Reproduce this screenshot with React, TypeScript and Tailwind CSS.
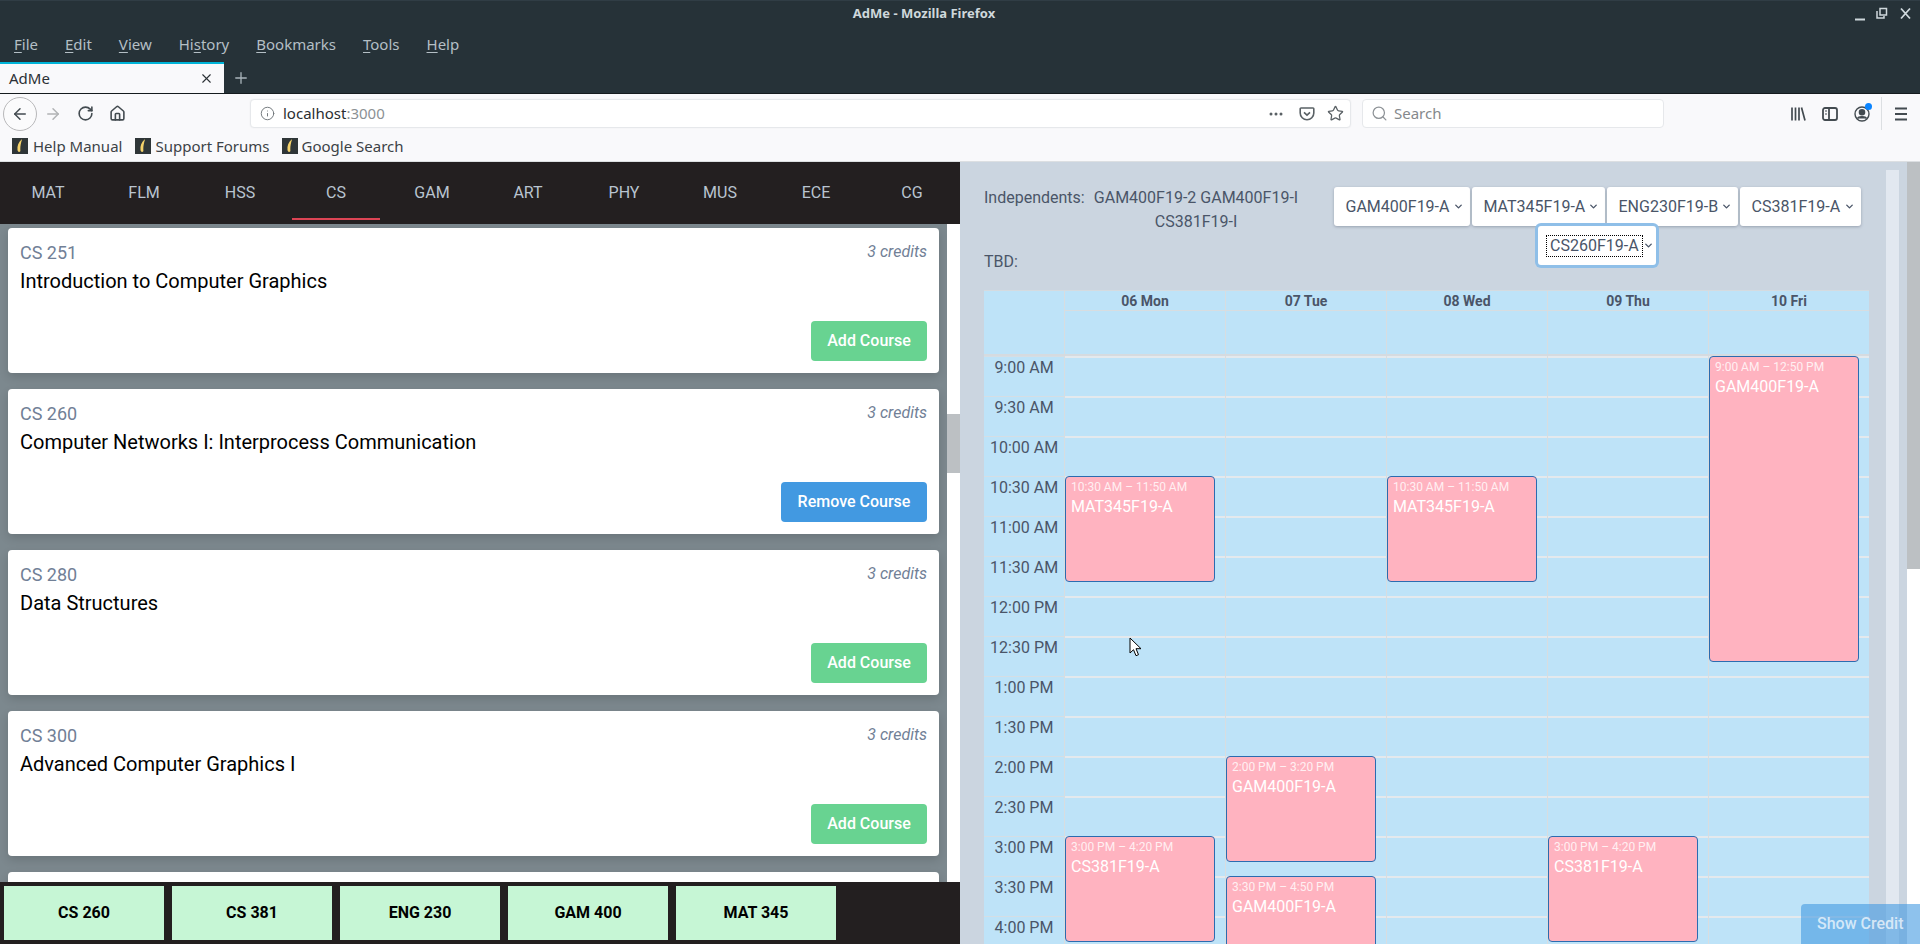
import { ArrowLeft, ArrowRight, ChevronDown, Home, Info, Plus, RotateCw, Search, Star, X } from "lucide-react";

const menuItems = [
  ["", "F", "ile"],
  ["", "E", "dit"],
  ["", "V", "iew"],
  ["Hi", "s", "tory"],
  ["", "B", "ookmarks"],
  ["", "T", "ools"],
  ["", "H", "elp"],
];

const subjects = ["MAT", "FLM", "HSS", "CS", "GAM", "ART", "PHY", "MUS", "ECE", "CG"];

const courses = [
  { code: "CS 251", name: "Introduction to Computer Graphics", added: false },
  { code: "CS 260", name: "Computer Networks I: Interprocess Communication", added: true },
  { code: "CS 280", name: "Data Structures", added: false },
  { code: "CS 300", name: "Advanced Computer Graphics I", added: false },
  { code: "CS 330", name: "", added: false },
];

const selected = ["CS 260", "CS 381", "ENG 230", "GAM 400", "MAT 345"];

const sections = [
  { label: "GAM400F19-A", width: "w-[136px]" },
  { label: "MAT345F19-A", width: "w-[133px]" },
  { label: "ENG230F19-B", width: "w-[131px]" },
  { label: "CS381F19-A", width: "w-[121px]" },
];

const times = [
  "9:00 AM", "9:30 AM", "10:00 AM", "10:30 AM", "11:00 AM", "11:30 AM", "12:00 PM", "12:30 PM",
  "1:00 PM", "1:30 PM", "2:00 PM", "2:30 PM", "3:00 PM", "3:30 PM", "4:00 PM", "4:30 PM",
];

const days = [
  {
    title: "06 Mon",
    events: [
      { time: "10:30 AM – 11:50 AM", name: "MAT345F19-A", box: "top-[120px] h-[106px]" },
      { time: "3:00 PM – 4:20 PM", name: "CS381F19-A", box: "top-[480px] h-[106px]" },
    ],
  },
  {
    title: "07 Tue",
    events: [
      { time: "2:00 PM – 3:20 PM", name: "GAM400F19-A", box: "top-[400px] h-[106px]" },
      { time: "3:30 PM – 4:50 PM", name: "GAM400F19-A", box: "top-[520px] h-[106px]" },
    ],
  },
  {
    title: "08 Wed",
    events: [{ time: "10:30 AM – 11:50 AM", name: "MAT345F19-A", box: "top-[120px] h-[106px]" }],
  },
  {
    title: "09 Thu",
    events: [{ time: "3:00 PM – 4:20 PM", name: "CS381F19-A", box: "top-[480px] h-[106px]" }],
  },
  {
    title: "10 Fri",
    events: [{ time: "9:00 AM – 12:50 PM", name: "GAM400F19-A", box: "top-0 h-[306px]" }],
  },
];

function Favicon() {
  return (
    <svg width="16" height="16" viewBox="0 0 16 16" className="shrink-0">
      <rect width="16" height="16" fill="#2f3638" />
      <path d="M9.5 1.5C6.5 4 5 8 5.5 12c.2 1.6 1.6 2.6 2.6 1.6.5-.5.2-1.400.2-2.600 0-3 .6-6 1.700-9.500z" fill="#f5d36b" />
    </svg>
  );
}

function BrowserChrome() {
  return (
    <div className="font-['Noto_Sans',sans-serif]">
      <div className="bg-[#263238] border-t border-[#303d45]">
        <div className="relative flex h-[26px] items-center justify-center pr-[72px] text-[13px] font-bold text-[#cfd8dc]">
          AdMe - Mozilla Firefox
          <div className="absolute right-0 top-0 h-[26px] w-[72px]">
            <svg width="72" height="26" viewBox="0 0 72 26" fill="none" stroke="#cfd8dc" strokeWidth="1.500">
              <path d="M7 18.500h10" strokeWidth="2" />
              <path d="M29 10v7h7v-2M32 7.500h6.500V14H32z" />
              <path d="M53 7.500l9 10M62 7.500l-9 10" strokeWidth="1.800" />
            </svg>
          </div>
        </div>
        <div className="flex h-[35px] items-center gap-[27px] pl-[14px] text-[15px] text-[#b4bfc5]">
          {menuItems.map(([before, key, after]) => (
            <span key={before + key + after}>
              {before}
              <span className="underline underline-offset-2">{key}</span>
              {after}
            </span>
          ))}
        </div>
        <div className="flex h-[32px] border-b border-[#151b1e]">
          <div className="flex w-[224px] items-center justify-between border-t-2 border-[#00b4d8] bg-[#f9f9fb] pl-[9px] pr-[10px] text-[15px] text-[#2b3035]">
            AdMe
            <X size={15} strokeWidth={1.750} />
          </div>
          <div className="flex w-[34px] items-center justify-center text-[#a9b4ba]">
            <Plus size={18} strokeWidth={1.750} />
          </div>
        </div>
      </div>

      <div className="flex h-[39px] items-center bg-[#f9f9fb] pl-[3px] text-[#434b50]">
        <div className="flex h-[34px] w-[34px] items-center justify-center rounded-full border border-[#b8b8ba] bg-[#fbfbfc]">
          <ArrowLeft size={18} strokeWidth={2} />
        </div>
        <div className="flex w-[32px] justify-center text-[#b1b3b5]">
          <ArrowRight size={18} strokeWidth={2} />
        </div>
        <div className="flex w-[32px] justify-center">
          <RotateCw size={17} strokeWidth={2.250} />
        </div>
        <div className="flex w-[32px] justify-center">
          <Home size={17} strokeWidth={2.250} />
        </div>
        <div className="ml-[117px] flex h-[29px] w-[1101px] items-center rounded-[4px] border border-[#e6e8eb] bg-white pl-[9px] pr-[6px] shadow-[0_0_2px_rgba(0,0,0,0.05)]">
          <Info size={15} strokeWidth={1.500} className="text-[#6d7377]" />
          <span className="ml-[8px] text-[15px] text-[#2a2e31]">
            localhost<span className="text-[#8c9194]">:3000</span>
          </span>
          <div className="ml-auto flex items-center gap-[12px]">
            <svg width="17" height="16" viewBox="0 0 17 16" className="mr-[2px]" fill="#5a6165">
              <circle cx="3" cy="8" r="1.500" />
              <circle cx="8" cy="8" r="1.500" />
              <circle cx="13" cy="8" r="1.500" />
            </svg>
            <svg width="16" height="16" viewBox="0 0 16 16" fill="none" stroke="#5a6165" strokeWidth="1.600">
              <path d="M2 2h12a.8.8 0 0 1 .8.8V7a6.800 6.800 0 0 1-13.600 0V2.800A.8.8 0 0 1 2 2z" />
              <path d="M5 6.300l3 2.900 3-2.900" />
            </svg>
            <Star size={17} strokeWidth={1.800} className="text-[#5a6165]" />
          </div>
        </div>
        <div className="ml-[11px] flex h-[29px] w-[302px] items-center rounded-[4px] border border-[#e6e8eb] bg-white pl-[8px] text-[15px] text-[#85898c]">
          <Search size={17} strokeWidth={1.750} className="text-[#8d9296]" />
          <span className="ml-[6px]">Search</span>
        </div>
        <div className="ml-[118px] flex w-[32px] justify-center">
          <svg width="16" height="16" viewBox="0 0 16 16" fill="none" stroke="#434b50" strokeWidth="1.700">
            <path d="M2 1.500v13M5.500 1.500v13M9 1.500v13M11.500 1.500l3.500 13" />
          </svg>
        </div>
        <div className="flex w-[32px] justify-center">
          <svg width="16" height="16" viewBox="0 0 16 16" fill="none" stroke="#434b50" strokeWidth="1.800">
            <rect x="1" y="2" width="14" height="12" rx="2" />
            <path d="M7 2v12" />
            <path d="M3 5h2M3 8h2" strokeWidth="1.200" />
          </svg>
        </div>
        <div className="relative flex w-[32px] justify-center">
          <svg width="16" height="16" viewBox="0 0 16 16" fill="none" stroke="#434b50" strokeWidth="1.400">
            <circle cx="8" cy="8" r="7" />
            <circle cx="8" cy="6.300" r="2.600" fill="#434b50" />
            <path d="M3.500 12.500c1-2.500 8-2.500 9 0" fill="#434b50" />
          </svg>
          <div className="absolute right-[6px] top-[-3px] h-[7px] w-[7px] rounded-full bg-[#0a84ff]" />
        </div>
        <div className="ml-[3px] h-[33px] w-px bg-[#dcdfe2]" />
        <div className="ml-[3px] flex w-[32px] justify-center">
          <svg width="16" height="16" viewBox="0 0 16 16" stroke="#434b50" strokeWidth="2">
            <path d="M2 2.500h12M2 8h12M2 13.500h12" />
          </svg>
        </div>
      </div>

      <div className="flex h-[29px] items-center border-b border-[#dcdfe2] bg-[#f9f9fb] pb-[2px] pl-[12px] text-[15px] text-[#3c4246]">
        <Favicon />
        <span className="ml-[5px] mr-[13px]">Help Manual</span>
        <Favicon />
        <span className="ml-[4px] mr-[12px]">Support Forums</span>
        <Favicon />
        <span className="ml-[4px]">Google Search</span>
      </div>
    </div>
  );
}

function CourseCard({ course }: { course: (typeof courses)[number] }) {
  return (
    <div className="flex h-[145px] shrink-0 flex-col rounded-[4px] bg-white pb-[12px] pl-[12px] pr-[12px] pt-[12px] shadow-[0_4px_10px_rgba(0,0,0,0.14)]">
      <div className="flex items-start justify-between">
        <span className="text-[18px] leading-[26px] text-[#718096]">{course.code}</span>
        <span className="text-[16px] italic leading-6 text-[#718096]">3 credits</span>
      </div>
      <div className="text-[20px] leading-[30px] text-black">{course.name}</div>
      <div className="mt-auto flex justify-end">
        {course.added ? (
          <div className="flex h-[40px] w-[146px] items-center justify-center rounded-[4px] bg-[#4299e1] text-[16px] font-medium text-white">
            Remove Course
          </div>
        ) : (
          <div className="flex h-[40px] w-[116px] items-center justify-center rounded-[4px] bg-[#68d391] text-[16px] font-medium text-white">
            Add Course
          </div>
        )}
      </div>
    </div>
  );
}

function CoursePanel() {
  return (
    <div className="flex h-full w-[960px] shrink-0 flex-col">
      <div className="flex h-[62px] shrink-0 bg-[#231f20]">
        {subjects.map((subject) => (
          <div key={subject} className="relative flex w-[96px] items-center justify-center text-[16px] text-[#b9c4d0]">
            {subject}
            {subject === "CS" && <div className="absolute bottom-[4px] left-[4px] h-[2px] w-[88px] bg-[#dc4454]" />}
          </div>
        ))}
      </div>
      <div className="flex min-h-0 flex-1">
        <div className="flex w-[947px] flex-col gap-[16px] overflow-hidden bg-[#7c888e] pl-[8px] pr-[8px] pt-[4px]">
          {courses.map((course) => (
            <CourseCard key={course.code} course={course} />
          ))}
        </div>
        <div className="w-[13px] bg-white pt-[190px]">
          <div className="h-[59px] bg-[#bcc0c3]" />
        </div>
      </div>
      <div className="flex h-[62px] shrink-0 items-center gap-[8px] bg-[#231f20] pl-[4px]">
        {selected.map((code) => (
          <div key={code} className="flex h-[54px] w-[160px] items-center justify-center bg-[#c6f6d5] text-[16px] font-bold text-black">
            {code}
          </div>
        ))}
      </div>
    </div>
  );
}

function ScheduleHeader() {
  return (
    <div className="flex h-[128px] shrink-0 pt-[24px] text-[16px] leading-6 text-[#4a5568]">
      <div className="w-[349px]">
        <div className="flex">
          <span className="w-[109px]">Independents:</span>
          <span className="w-[206px] text-center">GAM400F19-2 GAM400F19-I CS381F19-I</span>
        </div>
        <div className="mt-[16px]">TBD:</div>
      </div>
      <div className="mt-px flex w-[528px] flex-wrap content-start justify-center gap-x-[2px]">
        {sections.map((section) => (
          <div
            key={section.label}
            className={`flex h-[39px] ${section.width} items-center justify-between rounded-[3px] bg-white pl-[12px] pr-[6px] shadow-[0_1px_3px_rgba(74,85,104,0.4)]`}
          >
            {section.label}
            <ChevronDown size={11} strokeWidth={3} />
          </div>
        ))}
        <div className="relative z-10 flex h-[39px] w-[118px] items-center rounded-[3px] bg-white pl-[8px] ring-[3px] ring-[#8fbfe8]">
          <span className="border border-dotted border-black px-[3px] leading-[20px]">CS260F19-A</span>
          <ChevronDown size={11} strokeWidth={3} className="shrink-0" />
        </div>
      </div>
    </div>
  );
}

function Calendar() {
  return (
    <div className="w-[885px] bg-[#bee3f8]">
      <div className="grid h-[20px] grid-cols-[80px_repeat(5,161px)] border-t border-[#d5dbe0] text-[14px] font-bold leading-[20px] text-[#4a5568]">
        <div />
        {days.map((day) => (
          <div key={day.title} className="border-l border-[#d8dde0] text-center">
            {day.title}
          </div>
        ))}
      </div>
      <div className="grid h-[46px] grid-cols-[80px_repeat(5,161px)] border-b-2 border-[#d5dbe0]">
        <div />
        {days.map((day) => (
          <div key={day.title} className="border-l border-t border-[#d8dde0]" />
        ))}
      </div>
      <div className="grid grid-cols-[80px_repeat(5,161px)]">
        <div>
          {times.map((time) => (
            <div key={time} className="h-[40px] border-t border-[#d5dee4] text-center text-[16px] leading-[22px] text-[#4a5568]">
              {time}
            </div>
          ))}
        </div>
        {days.map((day) => (
          <div key={day.title} className="relative border-l border-[#d8dde0]">
            {times.map((time) => (
              <div key={time} className="h-[40px] border-t-2 border-[#e4e9ed]" />
            ))}
            {day.events.map((event) => (
              <div
                key={event.time}
                className={`absolute left-0 w-[150px] ${event.box} rounded-[4px] border border-[#2b6cb0] bg-[#ffb3c0] pl-[5px] pt-[2px] text-white`}
              >
                <div className="text-[12px] leading-4 opacity-80">{event.time}</div>
                <div className="text-[16px] leading-6">{event.name}</div>
              </div>
            ))}
          </div>
        ))}
      </div>
    </div>
  );
}

function SchedulePanel() {
  return (
    <div className="relative flex h-full min-w-0 flex-1 overflow-hidden">
      <div className="flex h-full w-[947px] bg-[#cbd5e0] pl-[24px]">
        <div className="w-[885px]">
          <ScheduleHeader />
          <Calendar />
        </div>
        <div className="ml-[17px] mt-[8px] h-full w-[13px] bg-[#e2e8f0]" />
      </div>
      <div className="w-[13px] bg-white">
        <div className="h-[407px] bg-[#bcc0c3]" />
      </div>
      <div className="absolute bottom-0 right-0 flex h-[40px] w-[119px] items-center rounded-tl-[4px] bg-[#4299e1]/60 pl-[16px] text-[16px] font-medium text-white/70">
        Show Credit
      </div>
      {/* mouse pointer */}
      <svg width="14" height="20" viewBox="0 0 14 20" className="absolute left-[169px] top-[475px]">
        <path d="M1 1v15l3.500-3.300 2.500 6 2.500-1-2.500-6h5z" fill="#fff" stroke="#000" strokeWidth="1" />
      </svg>
    </div>
  );
}

export default function App() {
  return (
    <div className="flex h-[944px] w-[1920px] flex-col overflow-hidden bg-white font-['Roboto',sans-serif]">
      <BrowserChrome />
      <div className="flex min-h-0 flex-1">
        <CoursePanel />
        <SchedulePanel />
      </div>
    </div>
  );
}
